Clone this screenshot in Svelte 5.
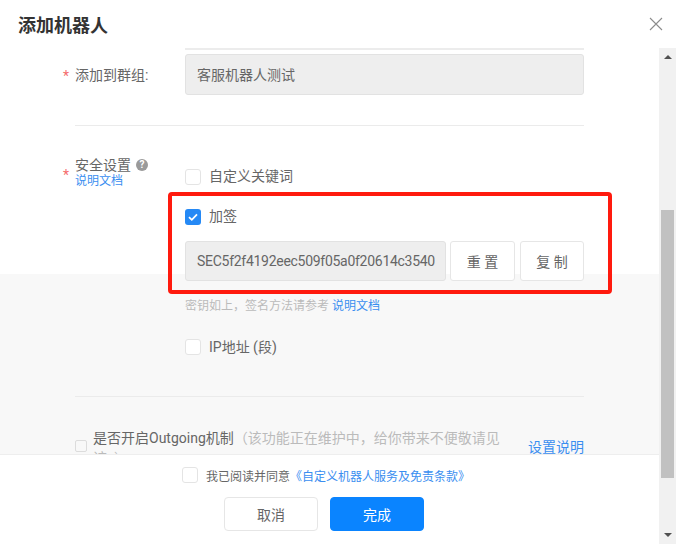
<script>
  const secret = "SEC5f2f4192eec509f05a0f20614c3540";
</script>

<div class="dialog">
  <header>
    <h2>添加机器人</h2>
    <svg class="close" width="14" height="14" viewBox="0 0 14 14" aria-label="关闭">
      <path d="M1 1l12 12M13 1L1 13" stroke="#8c8c8c" stroke-width="1.1" fill="none" />
    </svg>
  </header>

  <div class="main">
    <div class="left">
      <div class="content">
        <div class="top-line"></div>

        <div class="row group">
          <label class="name"><i class="star">*</i>添加到群组:</label>
          <div class="field">客服机器人测试</div>
        </div>

        <div class="divider first"></div>

        <div class="row security">
          <div class="name">
            <i class="star low">*</i>
            <div class="title">
              安全设置
              <span class="help">?</span>
            </div>
            <a href="#doc" class="doc">说明文档</a>
          </div>
          <div class="options">
            <div class="check keyword"><span class="box"></span>自定义关键词</div>
            <div class="check sign">
              <span class="box on">
                <svg width="16" height="16" viewBox="0 0 16 16">
                  <path d="M4 8.2l2.8 2.6L12 5.4" stroke="#fff" stroke-width="1.8" fill="none" />
                </svg>
              </span>
              加签
            </div>
            <div class="secret-row">
              <div class="field secret">{secret}</div>
              <button class="btn reset">重 置</button>
              <button class="btn copy">复 制</button>
            </div>
            <p class="tip">密钥如上，签名方法请参考 <a href="#doc">说明文档</a></p>
            <div class="check ip"><span class="box"></span>IP地址 (段)</div>
          </div>
        </div>

        <div class="divider second"></div>

        <div class="outgoing">
          <span class="box small"></span>
          <p>是否开启Outgoing机制<span class="muted">（该功能正在维护中，给你带来不便敬请见谅。）</span></p>
          <a href="#setup">设置说明</a>
        </div>

        <div class="redbox"></div>
      </div>

      <footer>
        <div class="agree">
          <span class="box"></span>
          <span>我已阅读并同意<a href="#terms">《自定义机器人服务及免责条款》</a></span>
        </div>
        <div class="actions">
          <button class="act">取消</button>
          <button class="act primary">完成</button>
        </div>
      </footer>
    </div>

    <div class="scrollbar">
      <span class="arrow up"></span>
      <div class="thumb"></div>
      <span class="arrow down"></span>
    </div>
  </div>
</div>

<style>
  :global(body) {
    margin: 0;
    background: #fff;
  }

  .dialog {
    width: 676px;
    height: 544px;
    overflow: hidden;
    font-family: Roboto, "Noto Sans CJK SC", sans-serif;
    font-size: 14px;
    color: #666;
    background: #fff;
  }

  header {
    height: 48px;
    display: flex;
    align-items: center;
    justify-content: space-between;
    padding: 0 13px 0 18px;
    box-sizing: border-box;
  }

  h2 {
    margin: 4px 0 0;
    font-size: 18px;
    line-height: 26px;
    font-weight: 700;
    color: #333;
  }

  .close {
    margin-bottom: 1px;
  }

  .main {
    display: flex;
    height: 496px;
  }

  .left {
    width: 659px;
    display: flex;
    flex-direction: column;
  }

  .content {
    position: relative;
    height: 406px;
    overflow: hidden;
    padding: 0 75px;
    background: linear-gradient(#fff 226px, #f8f8f8 226px);
  }

  a {
    color: #3a8ef0;
    text-decoration: none;
  }

  .top-line {
    height: 2px;
    margin: 0 0 4px 110px;
    background: #ececec;
  }

  .row {
    display: grid;
    grid-template-columns: 110px 1fr;
  }

  .name {
    position: relative;
    line-height: 20px;
  }

  .star {
    position: absolute;
    left: -12px;
    top: 1px;
    color: #f56c6c;
    font-style: normal;
  }

  .star.low {
    top: 10px;
  }

  .group .name {
    align-self: center;
  }

  .field {
    height: 41px;
    line-height: 40px;
    box-sizing: border-box;
    padding: 0 11px;
    background: #eee;
    border: 1px solid #e2e2e2;
    border-radius: 3px;
  }

  .divider {
    height: 1px;
    background: #ebebeb;
  }

  .divider.first {
    margin: 30px 0 29px;
  }

  .divider.second {
    margin-top: 41px;
  }

  .title {
    display: flex;
    align-items: center;
    gap: 5px;
    height: 20px;
  }

  .help {
    width: 12px;
    height: 12px;
    border-radius: 50%;
    background: #9a9a9a;
    color: #fff;
    font-size: 10px;
    font-weight: 700;
    line-height: 12px;
    text-align: center;
  }

  .doc {
    display: block;
    font-size: 12px;
    line-height: 12px;
    margin-top: 0;
  }

  .options {
    padding-top: 14px;
  }

  .check {
    display: flex;
    align-items: center;
    gap: 8px;
    height: 16px;
    line-height: 16px;
  }

  .keyword,
  .sign {
    align-items: flex-start;
    line-height: 14px;
  }

  .box {
    display: block;
    flex: none;
    width: 16px;
    height: 16px;
    box-sizing: border-box;
    background: #fff;
    border: 1px solid #e4e4e4;
    border-radius: 3px;
  }

  .box.on {
    background: #2589f5;
    border: 0;
  }

  .box.on svg {
    display: block;
  }

  .box.small {
    width: 12px;
    height: 12px;
    border-radius: 2px;
    background: transparent;
    border-color: #dcdcdc;
    margin-top: 12px;
  }

  .sign {
    margin-top: 24px;
  }

  .secret-row {
    display: flex;
    margin-top: 16px;
  }

  .secret {
    width: 261px;
    height: 40px;
    line-height: 38px;
    letter-spacing: -0.28px;
    white-space: nowrap;
    overflow: hidden;
    flex: none;
  }

  .btn {
    height: 40px;
    box-sizing: border-box;
    border: 1px solid #e6e6e6;
    border-radius: 3px;
    background: #fff;
    color: #666;
    font: inherit;
    padding: 0;
  }

  .reset {
    width: 65px;
    margin-left: 4px;
  }

  .copy {
    width: 64px;
    margin-left: 5px;
  }

  .tip {
    margin: 17px 0 0;
    font-size: 12px;
    line-height: 16px;
    color: #bbb;
  }

  .ip {
    margin-top: 25px;
  }

  .outgoing {
    display: flex;
    margin-top: 31px;
  }

  .outgoing p {
    width: 412px;
    margin: 0 0 0 6px;
    line-height: 20px;
  }

  .outgoing .muted {
    color: #bbb;
  }

  .outgoing a {
    margin: 9px 0 0 24px;
    white-space: nowrap;
    line-height: 20px;
  }

  .redbox {
    position: absolute;
    left: 168px;
    top: 144px;
    width: 444px;
    height: 102px;
    box-sizing: border-box;
    border: 4px solid #ff1a0e;
    border-radius: 4px;
  }

  footer {
    height: 90px;
    background: #fff;
    border-top: 1px solid #eee;
    box-sizing: border-box;
  }

  .agree {
    display: flex;
    align-items: center;
    justify-content: center;
    gap: 8px;
    height: 16px;
    margin-top: 12px;
    padding-right: 7px;
    font-size: 12px;
    white-space: nowrap;
  }

  .actions {
    display: flex;
    justify-content: center;
    gap: 12px;
    margin-top: 14px;
    padding-right: 11px;
  }

  .act {
    width: 94px;
    height: 34px;
    box-sizing: border-box;
    border: 1px solid #e6e6e6;
    border-radius: 4px;
    background: #fff;
    color: #666;
    font: inherit;
    padding: 0 0 1px;
  }

  .primary {
    background: #0a84ff;
    border-color: #0a84ff;
    color: #fff;
  }

  .scrollbar {
    width: 17px;
    background: #f1f1f1;
    display: flex;
    flex-direction: column;
    align-items: center;
  }

  .thumb {
    width: 13px;
    height: 268px;
    margin-top: 151px;
    background: #c1c1c1;
  }

  .arrow {
    display: block;
    width: 0;
    height: 0;
    border-left: 4px solid transparent;
    border-right: 4px solid transparent;
  }

  .up {
    border-bottom: 4px solid #505050;
    margin-top: 7px;
  }

  .down {
    border-top: 4px solid #505050;
    margin-top: 55px;
  }
</style>
